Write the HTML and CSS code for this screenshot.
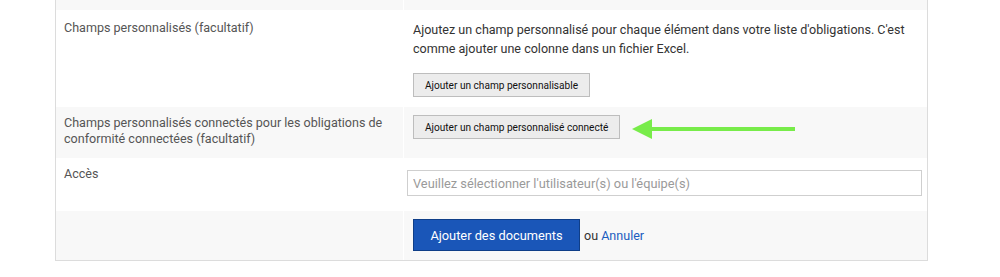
FILE: index.html
```html
<!DOCTYPE html>
<html lang="fr">
<head>
<meta charset="utf-8">
<link rel="stylesheet" href="styles.css">
</head>
<body>
<div class="card">
  <div class="row alt top">
    <div class="label"></div>
    <div class="field"></div>
  </div>
  <div class="row r1">
    <div class="label">Champs personnalisés (facultatif)</div>
    <div class="field">
      <p class="desc">Ajoutez un champ personnalisé pour chaque élément dans votre liste d'obligations. C'est comme ajouter une colonne dans un fichier Excel.</p>
      <button class="btn">Ajouter un champ personnalisable</button>
    </div>
  </div>
  <div class="row alt r2">
    <div class="label">Champs personnalisés connectés pour les obligations de conformité connectées (facultatif)</div>
    <div class="field">
      <button class="btn">Ajouter un champ personnalisé connecté</button>
    </div>
    <svg class="arrow" width="164" height="22" viewBox="0 0 164 22">
      <polygon points="0,11 20,1 20,21" fill="#78ec4a"/>
      <rect x="19" y="9" width="144" height="4" fill="#78ec4a"/>
    </svg>
  </div>
  <div class="row r3">
    <div class="label">Accès</div>
    <div class="field field-input">
      <input class="select" type="text" placeholder="Veuillez sélectionner l'utilisateur(s) ou l'équipe(s)">
    </div>
  </div>
  <div class="row alt r4">
    <div class="label"></div>
    <div class="field actions">
      <button class="btn-primary">Ajouter des documents</button>
      <span class="or">ou <a href="#" class="link">Annuler</a></span>
    </div>
  </div>
</div>
</body>
</html>
```

FILE: styles.css
```css
* { box-sizing: border-box; }
html, body { margin: 0; padding: 0; background: #fff; }
body {
  font-family: Roboto, "Liberation Sans", Arial, sans-serif;
  font-size: 12.55px;
  color: #333;
}
.card {
  margin-left: 55px;
  width: 873px;
  border: 1px solid #dcdcdc;
  border-top: none;
}
.row {
  display: flex;
  position: relative;
}
.label {
  width: 347px;
  flex: none;
  padding: 10px 8px 11px 8px;
  line-height: 16px;
  color: #555;
}
.field {
  flex: 1;
  margin-left: 1px;
  padding: 10px 9px 11px 9px;
}
.alt .label, .alt .field { background: #f8f8f8; }
.top { height: 10px; }
.top .label, .top .field { padding: 0; }
.r1 .field { padding-bottom: 10px; }
.desc {
  margin: 0 0 15px 0;
  line-height: 19px;
  color: #333;
}
.btn {
  display: block;
  height: 24px;
  padding: 0 11px;
  font-family: Roboto, "Liberation Sans", Arial, sans-serif;
  font-size: 10.1px;
  color: #111;
  background: #ececec;
  border: 1px solid #bdbdbd;
  border-radius: 0;
}
.r2 .label { padding-top: 8px; padding-bottom: 11px; }
.r2 .field { padding-top: 8px; }
.arrow {
  position: absolute;
  left: 576px;
  top: 11px;
}
.r3 .label { padding-top: 8px; }
.field-input { padding: 12px 5px 15px 3px; }
.select {
  display: block;
  width: 100%;
  height: 26px;
  padding: 0 5px;
  border: 1px solid #cfcfcf;
  font-family: Roboto, "Liberation Sans", Arial, sans-serif;
  font-size: 12.8px;
  color: #333;
  background: #fff;
  outline: none;
}
.select::placeholder { color: #9a9a9a; }
.actions {
  display: flex;
  align-items: center;
  padding-top: 8px;
  padding-bottom: 9px;
}
.btn-primary {
  height: 32px;
  width: 167px;
  padding: 0;
  background: #1a56b8;
  border: 1px solid #0f3e88;
  color: #fff;
  font-family: Roboto, "Liberation Sans", Arial, sans-serif;
  font-size: 12.8px;
  border-radius: 0;
}
.or { margin-left: 4px; color: #333; }
.link { color: #1a5dbf; text-decoration: none; }
```
